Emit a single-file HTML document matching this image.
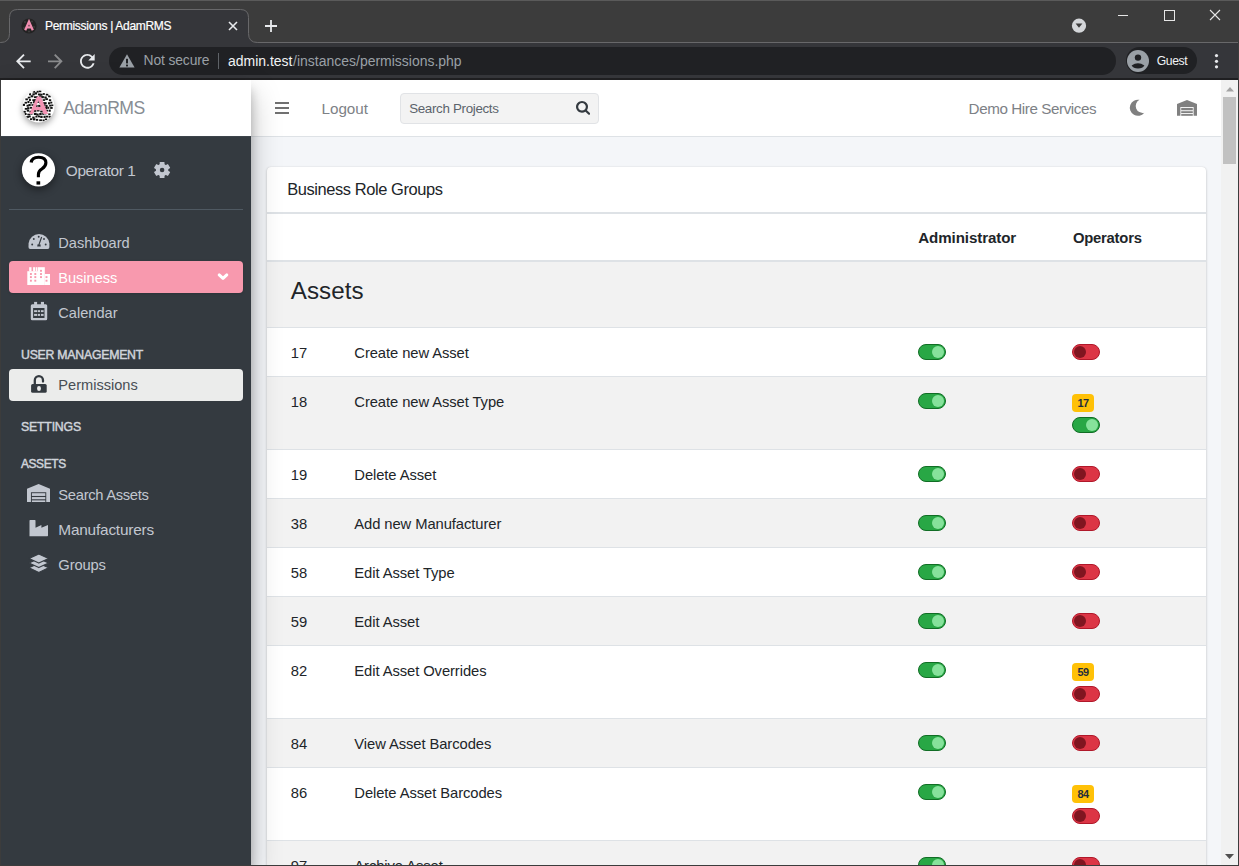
<!DOCTYPE html>
<html><head><meta charset="utf-8"><title>Permissions | AdamRMS</title>
<style>
*{box-sizing:border-box;margin:0;padding:0}
html,body{width:1239px;height:866px;overflow:hidden;background:#3c3c3c;font-family:"Liberation Sans",sans-serif;position:relative}
.a{position:absolute}
.t{white-space:nowrap;line-height:1}
</style></head><body>
<div class="a" style="left:0px;top:0px;width:1239px;height:1px;background:#5a5a5a;"></div>
<div class="a" style="left:0px;top:42px;width:1238px;height:1px;background:#68686a;"></div>
<div class="a" style="left:0px;top:43px;width:1238px;height:37px;background:#35363a;"></div>
<svg class="a" style="left:0px;top:0px;width:270px;height:50px;overflow:visible;" viewBox="0 0 270 50"><path d="M0.5 42.5 Q9.5 42.5 9.5 33.5 L9.5 17.5 Q9.5 9.5 17.5 9.5 L240.5 9.5 Q248.5 9.5 248.5 17.5 L248.5 33.5 Q248.5 42.5 257.5 42.5 L257.5 50 L0.5 50 Z" fill="#35363a"/><path d="M0.5 42.5 Q9.5 42.5 9.5 33.5 L9.5 17.5 Q9.5 9.5 17.5 9.5 L240.5 9.5 Q248.5 9.5 248.5 17.5 L248.5 33.5 Q248.5 42.5 257.5 42.5" fill="none" stroke="#68686a" stroke-width="1"/></svg>
<svg class="a" style="left:21px;top:18px;width:16px;height:16px;overflow:visible;" viewBox="0 0 16 16"><circle cx="8" cy="8" r="7.6" fill="#232323"/><circle cx="4" cy="4" r="1" fill="#3d3d3d"/><circle cx="11" cy="3.5" r="1" fill="#3d3d3d"/><circle cx="13" cy="9" r="1" fill="#3d3d3d"/><circle cx="3" cy="10" r="1" fill="#3d3d3d"/><circle cx="8" cy="13.5" r="1" fill="#3d3d3d"/><path d="M4.2 12.2 L8 3.6 L11.8 12.2 M5.6 9.4 L10.4 9.4" fill="none" stroke="#f08db0" stroke-width="2.3"/></svg>
<div class="a t" style="left:45.00px;top:19.98px;font-size:12.02px;letter-spacing:-0.304px;color:#ffffff;font-weight:normal;-webkit-text-stroke:0.2px #fff">Permissions | AdamRMS</div>
<svg class="a" style="left:228px;top:21px;width:10px;height:10px;overflow:visible;" viewBox="0 0 10 10"><path d="M1 1 L9 9 M9 1 L1 9" stroke="#e8eaed" stroke-width="1.6" fill="none"/></svg>
<svg class="a" style="left:264px;top:19px;width:14px;height:14px;overflow:visible;" viewBox="0 0 14 14"><path d="M7 1 L7 13 M1 7 L13 7" stroke="#e8eaed" stroke-width="1.8" fill="none"/></svg>
<svg class="a" style="left:1071px;top:18px;width:16px;height:16px;overflow:visible;" viewBox="0 0 16 16"><circle cx="8" cy="7.7" r="7.1" fill="#d4d6d9"/><path d="M4.6 5.6 L11.4 5.6 L8 9.8 Z" fill="#3c3c3c"/></svg>
<div class="a" style="left:1118px;top:15px;width:10px;height:1px;background:#e6e6e6;"></div>
<svg class="a" style="left:1163px;top:9px;width:12px;height:12px;overflow:visible;" viewBox="0 0 12 12"><rect x="1.5" y="1.5" width="10" height="10" fill="none" stroke="#e6e6e6" stroke-width="1"/></svg>
<svg class="a" style="left:1209px;top:9px;width:12px;height:12px;overflow:visible;" viewBox="0 0 12 12"><path d="M1 1 L11 11 M11 1 L1 11" stroke="#e6e6e6" stroke-width="1.1" fill="none"/></svg>
<svg class="a" style="left:15.5px;top:53.6px;width:14.7px;height:14.7px;overflow:visible;" viewBox="4 4 16 16"><path d="M20 11H7.83l5.59-5.59L12 4l-8 8 8 8 1.41-1.41L7.83 13H20v-2z" fill="#e8eaed"/></svg>
<svg class="a" style="left:47.7px;top:53.6px;width:14.7px;height:14.7px;overflow:visible;" viewBox="4 4 16 16"><path d="M12 4l-1.41 1.41L16.17 11H4v2h12.17l-5.58 5.59L12 20l8-8z" fill="#8a8b8d"/></svg>
<svg class="a" style="left:79.6px;top:53.6px;width:14.7px;height:14.7px;overflow:visible;" viewBox="4 4 16 16"><path d="M17.65 6.35A7.958 7.958 0 0 0 12 4c-4.42 0-7.99 3.58-7.99 8s3.57 8 7.99 8c3.730 0 6.84-2.55 7.73-6h-2.08A5.990 5.990 0 0 1 12 18c-3.31 0-6-2.69-6-6s2.69-6 6-6c1.66 0 3.14.69 4.22 1.78L13 11h7V4l-2.35 2.35z" fill="#e8eaed"/></svg>
<div class="a" style="left:109px;top:47px;width:1007px;height:28px;background:#202124;border-radius:14px"></div>
<svg class="a" style="left:119px;top:54px;width:16px;height:14px;overflow:visible;" viewBox="0 0 16 14"><path d="M8 0.3 L15.6 13.6 L0.4 13.6 Z" fill="#9aa0a6"/><rect x="7" y="4.8" width="2" height="4.6" fill="#202124"/><rect x="7" y="10.6" width="2" height="1.8" fill="#202124"/></svg>
<div class="a t" style="left:143.50px;top:54.12px;font-size:13.85px;letter-spacing:-0.109px;color:#9aa0a6;font-weight:normal;">Not secure</div>
<div class="a" style="left:218px;top:53px;width:1px;height:16px;background:#5f6368;"></div>
<div class="a t" style="left:228.00px;top:54.02px;font-size:13.98px;letter-spacing:0.000px;color:#f1f3f4;font-weight:normal;">admin.test</div>
<div class="a t" style="left:293.12px;top:54.02px;font-size:13.98px;letter-spacing:0.000px;color:#9aa0a6;font-weight:normal;">/instances/permissions.php</div>
<div class="a" style="left:1126px;top:47px;width:71px;height:27px;background:#202124;border-radius:14px"></div>
<svg class="a" style="left:1127px;top:50px;width:22px;height:22px;overflow:visible;" viewBox="0 0 22 22"><circle cx="11" cy="11" r="11" fill="#9aa0a6"/><circle cx="11" cy="7.6" r="3.2" fill="#202124"/><path d="M4.6 15.6 Q11 10.8 17.4 15.6 Q15.8 18.6 11 18.6 Q6.2 18.6 4.6 15.6 Z" fill="#202124"/></svg>
<div class="a t" style="left:1156.70px;top:54.65px;font-size:12.18px;letter-spacing:-0.382px;color:#f1f3f4;font-weight:normal;">Guest</div>
<svg class="a" style="left:1214px;top:53px;width:5px;height:16px;overflow:visible;" viewBox="0 0 5 16"><circle cx="2.5" cy="2.6" r="1.6" fill="#e8eaed"/><circle cx="2.5" cy="8.3" r="1.6" fill="#e8eaed"/><circle cx="2.5" cy="13.8" r="1.6" fill="#e8eaed"/></svg>
<div class="a" style="left:0px;top:78px;width:1238px;height:2px;background:#1f1f21;"></div>
<div class="a" style="left:1px;top:80px;width:1237px;height:785px;background:#f4f6f9;"></div>
<div class="a" style="left:251px;top:80px;width:970px;height:56px;background:#ffffff;"></div>
<div class="a" style="left:251px;top:136px;width:970px;height:1px;background:#dee2e6;"></div>
<div class="a" style="left:267px;top:167px;width:939px;height:733px;background:#ffffff;border-radius:4px;box-shadow:0 0 1px rgba(0,0,0,.125),0 1px 3px rgba(0,0,0,.2)"></div>
<div class="a t" style="left:287.20px;top:180.70px;font-size:16.47px;letter-spacing:-0.422px;color:#212529;font-weight:normal;">Business Role Groups</div>
<div class="a" style="left:267px;top:212px;width:939px;height:2px;background:#dee2e6;"></div>
<div class="a t" style="left:918.30px;top:230.26px;font-size:15.11px;letter-spacing:-0.093px;color:#212529;font-weight:bold;">Administrator</div>
<div class="a t" style="left:1072.90px;top:230.50px;font-size:14.82px;letter-spacing:-0.217px;color:#212529;font-weight:bold;">Operators</div>
<div class="a" style="left:267px;top:260px;width:939px;height:2px;background:#dee2e6;"></div>
<div class="a" style="left:267px;top:262px;width:939px;height:65px;background:#f2f2f2;"></div>
<div class="a t" style="left:290.80px;top:278.78px;font-size:24.15px;letter-spacing:0.053px;color:#212529;font-weight:normal;">Assets</div>
<div class="a" style="left:267px;top:327px;width:939px;height:49px;background:#ffffff;"></div>
<div class="a" style="left:267px;top:327px;width:939px;height:1px;background:#dee2e6;"></div>
<div class="a t" style="left:290.80px;top:345.73px;font-size:14.78px;letter-spacing:-0.080px;color:#212529;font-weight:normal;">17</div>
<div class="a t" style="left:354.30px;top:345.73px;font-size:14.78px;letter-spacing:-0.080px;color:#212529;font-weight:normal;">Create new Asset</div>
<svg class="a" style="left:918px;top:344px;width:28px;height:16px;overflow:visible;" viewBox="0 0 28 16"><rect x="0.5" y="0.5" width="27" height="15" rx="7.5" fill="#28a745" stroke="#116d25"/><circle cx="20" cy="8" r="6" fill="#86e29b"/></svg>
<svg class="a" style="left:1072px;top:344px;width:28px;height:16px;overflow:visible;" viewBox="0 0 28 16"><rect x="0.5" y="0.5" width="27" height="15" rx="7.5" fill="#dc3545" stroke="#b0182a"/><circle cx="8" cy="8" r="6" fill="#801520"/></svg>
<div class="a" style="left:267px;top:376px;width:939px;height:73px;background:#f2f2f2;"></div>
<div class="a" style="left:267px;top:376px;width:939px;height:1px;background:#dee2e6;"></div>
<div class="a t" style="left:290.80px;top:394.73px;font-size:14.78px;letter-spacing:-0.080px;color:#212529;font-weight:normal;">18</div>
<div class="a t" style="left:354.30px;top:394.73px;font-size:14.78px;letter-spacing:-0.080px;color:#212529;font-weight:normal;">Create new Asset Type</div>
<svg class="a" style="left:918px;top:393px;width:28px;height:16px;overflow:visible;" viewBox="0 0 28 16"><rect x="0.5" y="0.5" width="27" height="15" rx="7.5" fill="#28a745" stroke="#116d25"/><circle cx="20" cy="8" r="6" fill="#86e29b"/></svg>
<div class="a" style="left:1072px;top:394px;width:22px;height:18px;background:#ffc107;border-radius:4px"></div>
<div class="a t" style="left:1077.50px;top:397.73px;font-size:10.91px;letter-spacing:-0.508px;color:#1f2d3d;font-weight:bold;">17</div>
<svg class="a" style="left:1072px;top:417px;width:28px;height:16px;overflow:visible;" viewBox="0 0 28 16"><rect x="0.5" y="0.5" width="27" height="15" rx="7.5" fill="#28a745" stroke="#116d25"/><circle cx="20" cy="8" r="6" fill="#86e29b"/></svg>
<div class="a" style="left:267px;top:449px;width:939px;height:49px;background:#ffffff;"></div>
<div class="a" style="left:267px;top:449px;width:939px;height:1px;background:#dee2e6;"></div>
<div class="a t" style="left:290.80px;top:467.73px;font-size:14.78px;letter-spacing:-0.080px;color:#212529;font-weight:normal;">19</div>
<div class="a t" style="left:354.30px;top:467.73px;font-size:14.78px;letter-spacing:-0.080px;color:#212529;font-weight:normal;">Delete Asset</div>
<svg class="a" style="left:918px;top:466px;width:28px;height:16px;overflow:visible;" viewBox="0 0 28 16"><rect x="0.5" y="0.5" width="27" height="15" rx="7.5" fill="#28a745" stroke="#116d25"/><circle cx="20" cy="8" r="6" fill="#86e29b"/></svg>
<svg class="a" style="left:1072px;top:466px;width:28px;height:16px;overflow:visible;" viewBox="0 0 28 16"><rect x="0.5" y="0.5" width="27" height="15" rx="7.5" fill="#dc3545" stroke="#b0182a"/><circle cx="8" cy="8" r="6" fill="#801520"/></svg>
<div class="a" style="left:267px;top:498px;width:939px;height:49px;background:#f2f2f2;"></div>
<div class="a" style="left:267px;top:498px;width:939px;height:1px;background:#dee2e6;"></div>
<div class="a t" style="left:290.80px;top:516.73px;font-size:14.78px;letter-spacing:-0.080px;color:#212529;font-weight:normal;">38</div>
<div class="a t" style="left:354.30px;top:516.73px;font-size:14.78px;letter-spacing:-0.080px;color:#212529;font-weight:normal;">Add new Manufacturer</div>
<svg class="a" style="left:918px;top:515px;width:28px;height:16px;overflow:visible;" viewBox="0 0 28 16"><rect x="0.5" y="0.5" width="27" height="15" rx="7.5" fill="#28a745" stroke="#116d25"/><circle cx="20" cy="8" r="6" fill="#86e29b"/></svg>
<svg class="a" style="left:1072px;top:515px;width:28px;height:16px;overflow:visible;" viewBox="0 0 28 16"><rect x="0.5" y="0.5" width="27" height="15" rx="7.5" fill="#dc3545" stroke="#b0182a"/><circle cx="8" cy="8" r="6" fill="#801520"/></svg>
<div class="a" style="left:267px;top:547px;width:939px;height:49px;background:#ffffff;"></div>
<div class="a" style="left:267px;top:547px;width:939px;height:1px;background:#dee2e6;"></div>
<div class="a t" style="left:290.80px;top:565.73px;font-size:14.78px;letter-spacing:-0.080px;color:#212529;font-weight:normal;">58</div>
<div class="a t" style="left:354.30px;top:565.73px;font-size:14.78px;letter-spacing:-0.080px;color:#212529;font-weight:normal;">Edit Asset Type</div>
<svg class="a" style="left:918px;top:564px;width:28px;height:16px;overflow:visible;" viewBox="0 0 28 16"><rect x="0.5" y="0.5" width="27" height="15" rx="7.5" fill="#28a745" stroke="#116d25"/><circle cx="20" cy="8" r="6" fill="#86e29b"/></svg>
<svg class="a" style="left:1072px;top:564px;width:28px;height:16px;overflow:visible;" viewBox="0 0 28 16"><rect x="0.5" y="0.5" width="27" height="15" rx="7.5" fill="#dc3545" stroke="#b0182a"/><circle cx="8" cy="8" r="6" fill="#801520"/></svg>
<div class="a" style="left:267px;top:596px;width:939px;height:49px;background:#f2f2f2;"></div>
<div class="a" style="left:267px;top:596px;width:939px;height:1px;background:#dee2e6;"></div>
<div class="a t" style="left:290.80px;top:614.73px;font-size:14.78px;letter-spacing:-0.080px;color:#212529;font-weight:normal;">59</div>
<div class="a t" style="left:354.30px;top:614.73px;font-size:14.78px;letter-spacing:-0.080px;color:#212529;font-weight:normal;">Edit Asset</div>
<svg class="a" style="left:918px;top:613px;width:28px;height:16px;overflow:visible;" viewBox="0 0 28 16"><rect x="0.5" y="0.5" width="27" height="15" rx="7.5" fill="#28a745" stroke="#116d25"/><circle cx="20" cy="8" r="6" fill="#86e29b"/></svg>
<svg class="a" style="left:1072px;top:613px;width:28px;height:16px;overflow:visible;" viewBox="0 0 28 16"><rect x="0.5" y="0.5" width="27" height="15" rx="7.5" fill="#dc3545" stroke="#b0182a"/><circle cx="8" cy="8" r="6" fill="#801520"/></svg>
<div class="a" style="left:267px;top:645px;width:939px;height:73px;background:#ffffff;"></div>
<div class="a" style="left:267px;top:645px;width:939px;height:1px;background:#dee2e6;"></div>
<div class="a t" style="left:290.80px;top:663.73px;font-size:14.78px;letter-spacing:-0.080px;color:#212529;font-weight:normal;">82</div>
<div class="a t" style="left:354.30px;top:663.73px;font-size:14.78px;letter-spacing:-0.080px;color:#212529;font-weight:normal;">Edit Asset Overrides</div>
<svg class="a" style="left:918px;top:662px;width:28px;height:16px;overflow:visible;" viewBox="0 0 28 16"><rect x="0.5" y="0.5" width="27" height="15" rx="7.5" fill="#28a745" stroke="#116d25"/><circle cx="20" cy="8" r="6" fill="#86e29b"/></svg>
<div class="a" style="left:1072px;top:663px;width:22px;height:18px;background:#ffc107;border-radius:4px"></div>
<div class="a t" style="left:1077.50px;top:666.73px;font-size:10.91px;letter-spacing:-0.508px;color:#1f2d3d;font-weight:bold;">59</div>
<svg class="a" style="left:1072px;top:686px;width:28px;height:16px;overflow:visible;" viewBox="0 0 28 16"><rect x="0.5" y="0.5" width="27" height="15" rx="7.5" fill="#dc3545" stroke="#b0182a"/><circle cx="8" cy="8" r="6" fill="#801520"/></svg>
<div class="a" style="left:267px;top:718px;width:939px;height:49px;background:#f2f2f2;"></div>
<div class="a" style="left:267px;top:718px;width:939px;height:1px;background:#dee2e6;"></div>
<div class="a t" style="left:290.80px;top:736.73px;font-size:14.78px;letter-spacing:-0.080px;color:#212529;font-weight:normal;">84</div>
<div class="a t" style="left:354.30px;top:736.73px;font-size:14.78px;letter-spacing:-0.080px;color:#212529;font-weight:normal;">View Asset Barcodes</div>
<svg class="a" style="left:918px;top:735px;width:28px;height:16px;overflow:visible;" viewBox="0 0 28 16"><rect x="0.5" y="0.5" width="27" height="15" rx="7.5" fill="#28a745" stroke="#116d25"/><circle cx="20" cy="8" r="6" fill="#86e29b"/></svg>
<svg class="a" style="left:1072px;top:735px;width:28px;height:16px;overflow:visible;" viewBox="0 0 28 16"><rect x="0.5" y="0.5" width="27" height="15" rx="7.5" fill="#dc3545" stroke="#b0182a"/><circle cx="8" cy="8" r="6" fill="#801520"/></svg>
<div class="a" style="left:267px;top:767px;width:939px;height:73px;background:#ffffff;"></div>
<div class="a" style="left:267px;top:767px;width:939px;height:1px;background:#dee2e6;"></div>
<div class="a t" style="left:290.80px;top:785.73px;font-size:14.78px;letter-spacing:-0.080px;color:#212529;font-weight:normal;">86</div>
<div class="a t" style="left:354.30px;top:785.73px;font-size:14.78px;letter-spacing:-0.080px;color:#212529;font-weight:normal;">Delete Asset Barcodes</div>
<svg class="a" style="left:918px;top:784px;width:28px;height:16px;overflow:visible;" viewBox="0 0 28 16"><rect x="0.5" y="0.5" width="27" height="15" rx="7.5" fill="#28a745" stroke="#116d25"/><circle cx="20" cy="8" r="6" fill="#86e29b"/></svg>
<div class="a" style="left:1072px;top:785px;width:22px;height:18px;background:#ffc107;border-radius:4px"></div>
<div class="a t" style="left:1077.50px;top:788.73px;font-size:10.91px;letter-spacing:-0.508px;color:#1f2d3d;font-weight:bold;">84</div>
<svg class="a" style="left:1072px;top:808px;width:28px;height:16px;overflow:visible;" viewBox="0 0 28 16"><rect x="0.5" y="0.5" width="27" height="15" rx="7.5" fill="#dc3545" stroke="#b0182a"/><circle cx="8" cy="8" r="6" fill="#801520"/></svg>
<div class="a" style="left:267px;top:840px;width:939px;height:49px;background:#f2f2f2;"></div>
<div class="a" style="left:267px;top:840px;width:939px;height:1px;background:#dee2e6;"></div>
<div class="a t" style="left:290.80px;top:858.73px;font-size:14.78px;letter-spacing:-0.080px;color:#212529;font-weight:normal;">97</div>
<div class="a t" style="left:354.30px;top:858.73px;font-size:14.78px;letter-spacing:-0.080px;color:#212529;font-weight:normal;">Archive Asset</div>
<svg class="a" style="left:918px;top:857px;width:28px;height:16px;overflow:visible;" viewBox="0 0 28 16"><rect x="0.5" y="0.5" width="27" height="15" rx="7.5" fill="#28a745" stroke="#116d25"/><circle cx="20" cy="8" r="6" fill="#86e29b"/></svg>
<svg class="a" style="left:1072px;top:857px;width:28px;height:16px;overflow:visible;" viewBox="0 0 28 16"><rect x="0.5" y="0.5" width="27" height="15" rx="7.5" fill="#dc3545" stroke="#b0182a"/><circle cx="8" cy="8" r="6" fill="#801520"/></svg>
<div class="a" style="left:1px;top:80px;width:250px;height:785px;background:#343a40;box-shadow:0 14px 28px rgba(0,0,0,.25),0 10px 10px rgba(0,0,0,.22)"></div>
<div class="a" style="left:1px;top:80px;width:250px;height:56px;background:#ffffff;"></div>
<div class="a" style="left:1px;top:136px;width:250px;height:1px;background:#3d444b;"></div>
<svg class="a" style="left:22px;top:90px;width:33px;height:33px;overflow:visible;filter:drop-shadow(0 3px 3px rgba(0,0,0,.35))" viewBox="0 0 33 33"><defs><clipPath id="lc"><circle cx="16.5" cy="16.5" r="16"/></clipPath></defs><circle cx="16.5" cy="16.5" r="16" fill="#fff"/><g clip-path="url(#lc)"><rect x="0.63" y="13.83" width="2.34" height="2.10" fill="#111"/><rect x="1.35" y="20.86" width="2.46" height="1.84" fill="#111"/><rect x="3.36" y="8.41" width="2.54" height="1.86" fill="#111"/><rect x="2.61" y="11.83" width="2.36" height="1.78" fill="#111"/><rect x="4.56" y="14.76" width="2.20" height="1.94" fill="#111"/><rect x="2.79" y="17.94" width="2.58" height="1.77" fill="#111"/><rect x="4.75" y="19.59" width="2.33" height="2.05" fill="#111"/><rect x="2.55" y="22.98" width="2.03" height="2.00" fill="#111"/><rect x="4.27" y="26.06" width="2.70" height="1.79" fill="#111"/><rect x="7.04" y="3.27" width="2.05" height="2.02" fill="#111"/><rect x="5.78" y="6.70" width="2.66" height="1.77" fill="#111"/><rect x="6.93" y="9.05" width="2.02" height="1.88" fill="#111"/><rect x="5.41" y="11.03" width="2.05" height="2.06" fill="#111"/><rect x="6.42" y="14.04" width="2.31" height="2.12" fill="#111"/><rect x="5.09" y="17.16" width="2.44" height="2.13" fill="#111"/><rect x="7.44" y="20.73" width="2.22" height="1.85" fill="#111"/><rect x="5.32" y="23.69" width="2.77" height="1.69" fill="#111"/><rect x="6.55" y="25.53" width="2.19" height="1.89" fill="#111"/><rect x="10.38" y="3.33" width="2.41" height="1.97" fill="#111"/><rect x="8.64" y="5.24" width="2.72" height="2.07" fill="#111"/><rect x="10.32" y="9.25" width="2.31" height="1.84" fill="#111"/><rect x="8.17" y="11.97" width="2.05" height="1.64" fill="#111"/><rect x="9.41" y="14.16" width="2.27" height="1.63" fill="#111"/><rect x="8.01" y="16.90" width="2.08" height="1.82" fill="#111"/><rect x="9.04" y="20.83" width="2.49" height="1.69" fill="#111"/><rect x="8.26" y="22.95" width="2.29" height="1.67" fill="#111"/><rect x="10.25" y="26.60" width="2.37" height="1.89" fill="#111"/><rect x="8.03" y="28.26" width="2.27" height="1.76" fill="#111"/><rect x="10.72" y="0.99" width="2.42" height="1.69" fill="#111"/><rect x="12.65" y="2.29" width="2.42" height="2.19" fill="#111"/><rect x="12.00" y="6.26" width="2.21" height="1.82" fill="#111"/><rect x="12.12" y="9.10" width="2.43" height="2.07" fill="#111"/><rect x="11.04" y="11.12" width="2.65" height="2.19" fill="#111"/><rect x="12.97" y="14.86" width="2.65" height="2.04" fill="#111"/><rect x="11.08" y="17.52" width="2.28" height="1.62" fill="#111"/><rect x="12.04" y="19.83" width="2.21" height="2.02" fill="#111"/><rect x="11.86" y="22.83" width="2.75" height="2.19" fill="#111"/><rect x="13.35" y="25.79" width="2.18" height="1.74" fill="#111"/><rect x="10.93" y="28.22" width="2.50" height="2.14" fill="#111"/><rect x="14.63" y="0.62" width="2.07" height="2.00" fill="#111"/><rect x="15.92" y="3.50" width="2.60" height="1.89" fill="#111"/><rect x="13.87" y="6.26" width="2.27" height="2.08" fill="#111"/><rect x="16.15" y="8.52" width="2.32" height="2.17" fill="#111"/><rect x="14.71" y="11.29" width="2.10" height="1.69" fill="#111"/><rect x="16.16" y="14.83" width="2.12" height="2.10" fill="#111"/><rect x="14.98" y="17.56" width="2.28" height="1.93" fill="#111"/><rect x="14.75" y="19.48" width="2.78" height="1.99" fill="#111"/><rect x="14.31" y="23.55" width="2.35" height="2.12" fill="#111"/><rect x="16.01" y="25.56" width="2.20" height="1.78" fill="#111"/><rect x="13.98" y="28.90" width="2.21" height="1.85" fill="#111"/><rect x="16.86" y="0.07" width="2.47" height="2.14" fill="#111"/><rect x="18.19" y="3.68" width="2.40" height="1.92" fill="#111"/><rect x="17.16" y="5.37" width="2.35" height="1.71" fill="#111"/><rect x="17.74" y="9.23" width="2.14" height="1.88" fill="#111"/><rect x="17.48" y="11.72" width="2.26" height="1.91" fill="#111"/><rect x="18.54" y="14.88" width="2.08" height="1.94" fill="#111"/><rect x="16.64" y="17.04" width="2.62" height="1.90" fill="#111"/><rect x="18.22" y="20.58" width="2.73" height="1.87" fill="#111"/><rect x="17.25" y="23.00" width="2.41" height="2.02" fill="#111"/><rect x="18.24" y="25.81" width="2.38" height="2.16" fill="#111"/><rect x="17.20" y="29.35" width="2.75" height="1.76" fill="#111"/><rect x="20.79" y="3.10" width="2.06" height="1.74" fill="#111"/><rect x="19.24" y="6.07" width="2.63" height="2.14" fill="#111"/><rect x="20.60" y="9.21" width="2.53" height="1.69" fill="#111"/><rect x="20.60" y="12.17" width="2.18" height="2.17" fill="#111"/><rect x="20.81" y="14.38" width="2.79" height="2.10" fill="#111"/><rect x="19.47" y="17.30" width="2.41" height="1.80" fill="#111"/><rect x="20.64" y="20.09" width="2.58" height="1.61" fill="#111"/><rect x="20.22" y="23.02" width="2.01" height="1.80" fill="#111"/><rect x="21.50" y="25.77" width="2.05" height="2.19" fill="#111"/><rect x="20.51" y="29.48" width="2.08" height="1.76" fill="#111"/><rect x="23.76" y="3.75" width="2.66" height="1.76" fill="#111"/><rect x="22.28" y="6.48" width="2.46" height="2.02" fill="#111"/><rect x="23.35" y="8.20" width="2.55" height="1.86" fill="#111"/><rect x="22.15" y="12.17" width="2.51" height="2.08" fill="#111"/><rect x="23.59" y="14.89" width="2.05" height="2.12" fill="#111"/><rect x="22.71" y="17.00" width="2.44" height="2.16" fill="#111"/><rect x="23.66" y="19.76" width="2.42" height="1.74" fill="#111"/><rect x="22.43" y="22.67" width="2.04" height="1.72" fill="#111"/><rect x="23.63" y="25.69" width="2.61" height="1.77" fill="#111"/><rect x="22.86" y="28.44" width="2.28" height="1.61" fill="#111"/><rect x="26.13" y="5.42" width="2.66" height="1.86" fill="#111"/><rect x="26.89" y="9.27" width="2.31" height="1.90" fill="#111"/><rect x="25.98" y="12.23" width="2.27" height="2.10" fill="#111"/><rect x="27.18" y="14.74" width="2.32" height="1.81" fill="#111"/><rect x="25.20" y="16.76" width="2.06" height="2.04" fill="#111"/><rect x="26.67" y="19.63" width="2.07" height="2.10" fill="#111"/><rect x="26.26" y="23.37" width="2.23" height="1.75" fill="#111"/><rect x="26.70" y="25.86" width="2.13" height="1.87" fill="#111"/><rect x="28.28" y="11.73" width="2.00" height="1.76" fill="#111"/><rect x="29.31" y="14.50" width="2.03" height="1.61" fill="#111"/><rect x="28.19" y="16.97" width="2.47" height="1.92" fill="#111"/></g><path fill-rule="evenodd" fill="#f394b4" d="M15.0 6.4 L18.8 6.4 L26.1 23.9 L21.4 23.9 L20.1 20.3 L12.3 20.3 L11.0 23.9 L7.4 23.9 Z M16.5 10.4 L14.0 16.9 L19.0 16.9 Z"/></svg>
<div class="a t" style="left:63.30px;top:99.82px;font-size:17.62px;letter-spacing:-0.530px;color:#878d94;font-weight:normal;">AdamRMS</div>
<svg class="a" style="left:20px;top:150px;width:38px;height:40px;overflow:visible;filter:drop-shadow(0 3px 4px rgba(0,0,0,.45))" viewBox="0 0 38 40"><circle cx="18.5" cy="19.85" r="16.6" fill="#fff"/></svg>
<svg class="a" style="left:20px;top:150px;width:38px;height:40px;overflow:visible;" viewBox="0 0 38 40"><path d="M11.2 12.5 Q11.7 7.2 18.6 7.2 Q25.9 7.2 25.9 12.8 Q25.9 16.4 21.8 19 Q18.4 21.1 18.4 24.4 L18.4 27.2" fill="none" stroke="#000" stroke-width="3.1"/><rect x="16.5" y="31.3" width="3.7" height="3.3" fill="#000"/></svg>
<div class="a t" style="left:65.80px;top:163.09px;font-size:15.42px;letter-spacing:-0.390px;color:#c2c7d0;font-weight:normal;">Operator 1</div>
<svg class="a" style="left:148px;top:156px;width:28px;height:28px;overflow:visible;" viewBox="0 0 28 28"><g transform="translate(14.1 14)" fill="#c2c7d0"><circle r="6.2"/><rect x="-2.4" y="-8.1" width="4.8" height="5" rx="0.6" transform="rotate(0)"/><rect x="-2.4" y="-8.1" width="4.8" height="5" rx="0.6" transform="rotate(60)"/><rect x="-2.4" y="-8.1" width="4.8" height="5" rx="0.6" transform="rotate(120)"/><rect x="-2.4" y="-8.1" width="4.8" height="5" rx="0.6" transform="rotate(180)"/><rect x="-2.4" y="-8.1" width="4.8" height="5" rx="0.6" transform="rotate(240)"/><rect x="-2.4" y="-8.1" width="4.8" height="5" rx="0.6" transform="rotate(300)"/></g><circle cx="14.1" cy="14" r="2.3" fill="#343a40"/></svg>
<div class="a" style="left:9px;top:209px;width:234px;height:1px;background:#4f5962;"></div>
<div class="a" style="left:9px;top:261px;width:234px;height:32px;background:#f899ae;border-radius:4px;box-shadow:0 1px 3px rgba(0,0,0,.12)"></div>
<div class="a" style="left:9px;top:369px;width:234px;height:32px;background:#ebeceb;border-radius:4px"></div>
<div class="a t" style="left:58.30px;top:235.69px;font-size:14.60px;letter-spacing:0.000px;color:#c2c7d0;font-weight:normal;">Dashboard</div>
<div class="a t" style="left:58.20px;top:270.89px;font-size:14.60px;letter-spacing:0.000px;color:#ffffff;font-weight:normal;">Business</div>
<div class="a t" style="left:58.30px;top:305.59px;font-size:14.60px;letter-spacing:0.000px;color:#c2c7d0;font-weight:normal;">Calendar</div>
<div class="a t" style="left:58.30px;top:378.49px;font-size:14.60px;letter-spacing:0.000px;color:#484e54;font-weight:normal;">Permissions</div>
<div class="a t" style="left:58.30px;top:488.34px;font-size:14.78px;letter-spacing:-0.311px;color:#c2c7d0;font-weight:normal;">Search Assets</div>
<div class="a t" style="left:58.30px;top:521.93px;font-size:15.38px;letter-spacing:-0.199px;color:#c2c7d0;font-weight:normal;">Manufacturers</div>
<div class="a t" style="left:58.30px;top:558.36px;font-size:14.75px;letter-spacing:-0.139px;color:#c2c7d0;font-weight:normal;">Groups</div>
<div class="a t" style="left:21.00px;top:348.56px;font-size:12.29px;letter-spacing:-0.237px;color:#d0d4db;font-weight:normal;-webkit-text-stroke:0.45px #d0d4db">USER MANAGEMENT</div>
<div class="a t" style="left:21.00px;top:420.51px;font-size:12.34px;letter-spacing:-0.215px;color:#d0d4db;font-weight:normal;-webkit-text-stroke:0.45px #d0d4db">SETTINGS</div>
<div class="a t" style="left:21.00px;top:458.87px;font-size:11.92px;letter-spacing:-0.381px;color:#d0d4db;font-weight:normal;-webkit-text-stroke:0.45px #d0d4db">ASSETS</div>
<svg class="a" style="left:24px;top:228px;width:30px;height:26px;overflow:visible;" viewBox="0 0 30 26"><path d="M6.2 21 Q4.5 21 4.5 19 L4.6 15.4 A10.45 10.45 0 0 1 25.4 15.4 L25.4 19 Q25.4 21 23.7 21 Z" fill="#c2c7d0"/><g fill="#343a40"><circle cx="8.2" cy="16.5" r="0.95"/><circle cx="9.8" cy="11" r="0.95"/><circle cx="14.7" cy="8.8" r="0.95"/><circle cx="20" cy="11" r="0.95"/><circle cx="21.7" cy="16.5" r="0.95"/><path d="M17.1 8.8 L18.2 9.2 L15.6 16.6 L14.5 16.2 Z"/><path d="M13.6 16.2 L16.4 16.2 L16.8 18.6 L13.2 18.6 Z"/></g></svg>
<svg class="a" style="left:24px;top:262px;width:30px;height:30px;overflow:visible;" viewBox="0 0 30 30"><g fill="#fff"><rect x="3.3" y="9.2" width="10.8" height="13.8"/><rect x="5.2" y="5.2" width="2.3" height="4.2"/><rect x="9.1" y="5.2" width="2.2" height="4.2"/><rect x="11.9" y="5.2" width="1.5" height="4.2"/><rect x="13.9" y="5.2" width="6.9" height="17.8"/><rect x="20.6" y="12" width="5.4" height="11"/></g><rect x="5.95" y="11.05" width="1.9" height="1.9" fill="#f899ae"/><rect x="10.350000000000001" y="11.05" width="1.9" height="1.9" fill="#f899ae"/><rect x="16.05" y="7.8500000000000005" width="1.9" height="1.9" fill="#f899ae"/><rect x="16.05" y="11.05" width="1.9" height="1.9" fill="#f899ae"/><rect x="5.95" y="14.15" width="1.9" height="1.9" fill="#f899ae"/><rect x="10.350000000000001" y="14.15" width="1.9" height="1.9" fill="#f899ae"/><rect x="16.05" y="14.15" width="1.9" height="1.9" fill="#f899ae"/><rect x="21.55" y="14.15" width="1.9" height="1.9" fill="#f899ae"/><rect x="5.95" y="17.75" width="1.9" height="1.9" fill="#f899ae"/><rect x="10.350000000000001" y="17.75" width="1.9" height="1.9" fill="#f899ae"/><rect x="21.55" y="17.75" width="1.9" height="1.9" fill="#f899ae"/></svg>
<svg class="a" style="left:210px;top:265px;width:26px;height:24px;overflow:visible;" viewBox="0 0 26 24"><path d="M9.2 9.9 L13 13.4 L16.8 9.9" fill="none" stroke="#fff" stroke-width="3" stroke-linecap="round" stroke-linejoin="round"/></svg>
<svg class="a" style="left:26px;top:298px;width:26px;height:26px;overflow:visible;" viewBox="0 0 26 26"><path fill="#c2c7d0" fill-rule="evenodd" d="M6.3 6.3 L19.7 6.3 Q21.2 6.3 21.2 7.8 L21.2 20.7 Q21.2 22.2 19.7 22.2 L6.3 22.2 Q4.8 22.2 4.8 20.7 L4.8 7.8 Q4.8 6.3 6.3 6.3 Z M7.1 10.1 L7.1 20 L18.5 20 L18.5 10.1 Z"/><g fill="#c2c7d0"><rect x="8.1" y="3.9" width="3" height="3"/><rect x="14.9" y="3.9" width="3.1" height="3"/><rect x="8.1" y="12.2" width="2.9" height="1.9"/><rect x="11.7" y="12.2" width="2.4" height="1.9"/><rect x="15" y="12.2" width="2.6" height="1.9"/><rect x="8.1" y="15.9" width="2.9" height="2"/><rect x="11.7" y="15.9" width="2.4" height="2"/><rect x="15" y="15.9" width="2.6" height="2"/></g></svg>
<svg class="a" style="left:26px;top:370px;width:26px;height:26px;overflow:visible;" viewBox="0 0 26 26"><path d="M8.8 14.5 L8.8 10.2 A4.1 4.1 0 0 1 17 10.2 L17 11.6" fill="none" stroke="#343a40" stroke-width="2.3" stroke-linecap="round"/><rect x="5.1" y="14.1" width="15.6" height="8.6" rx="1.5" fill="#343a40"/><rect x="11.1" y="16" width="3.8" height="4.9" rx="1.9" fill="#ebeceb"/></svg>
<svg class="a" style="left:26.9px;top:483.8px;width:23.2px;height:18.4px;overflow:visible;overflow:hidden" viewBox="0 0 100 100" preserveAspectRatio="none"><path d="M0 26 L50 0 L100 26 L100 100 L83 100 L83 45 L17 45 L17 100 L0 100 Z" fill="#c2c7d0"/><g fill="#c2c7d0"><rect x="21" y="50" width="58" height="15"/><rect x="21" y="71" width="58" height="12"/><rect x="21" y="89" width="58" height="11"/></g></svg>
<svg class="a" style="left:24px;top:514px;width:30px;height:30px;overflow:visible;" viewBox="0 0 30 30"><path d="M5.5 22.2 L5.5 6.6 Q5.5 5.9 6.2 5.9 L10.9 5.9 Q11.5 5.9 11.5 6.6 L11.5 13.7 L17.4 11.1 L17.4 13.7 L24 11.1 L24 21.5 Q24 22.2 23.3 22.2 Z" fill="#c2c7d0"/></svg>
<svg class="a" style="left:24px;top:514px;width:30px;height:64px;overflow:visible;" viewBox="0 0 30 64"><g fill="#c2c7d0" stroke="#343a40" stroke-width="1.1" stroke-linejoin="round"><path d="M14.8 49.2 L24.6 53.8 L14.8 58.4 L5 53.8 Z"/><path d="M14.8 44.4 L24.6 49.0 L14.8 53.6 L5 49.0 Z"/><path d="M14.8 39.9 L24.6 44.5 L14.8 49.1 L5 44.5 Z"/></g></svg>
<div class="a" style="left:275px;top:102px;width:14px;height:2px;background:#707070;"></div>
<div class="a" style="left:275px;top:107px;width:14px;height:2px;background:#707070;"></div>
<div class="a" style="left:275px;top:112px;width:14px;height:2px;background:#707070;"></div>
<div class="a t" style="left:321.60px;top:100.66px;font-size:15.22px;letter-spacing:-0.057px;color:#7d8186;font-weight:normal;">Logout</div>
<div class="a" style="left:400px;top:93px;width:199px;height:31px;background:#f3f3f3;border:1px solid #e1e3e6;border-radius:4px"></div>
<div class="a t" style="left:409.20px;top:101.73px;font-size:13.37px;letter-spacing:-0.328px;color:#5b636b;font-weight:normal;">Search Projects</div>
<svg class="a" style="left:576px;top:101px;width:14.20px;height:13.80px;" viewBox="0.0 -1408.0 1664.0 1664.0" preserveAspectRatio="none"><path transform="scale(1,-1)" fill="#343a40" d="M1020.5 387.5Q1152 519 1152.0 704.0Q1152 889 1020.5 1020.5Q889 1152 704.0 1152.0Q519 1152 387.5 1020.5Q256 889 256.0 704.0Q256 519 387.5 387.5Q519 256 704.0 256.0Q889 256 1020.5 387.5ZM1664 -128Q1664 -180 1626.0 -218.0Q1588 -256 1536 -256Q1482 -256 1446 -218L1103 124Q924 0 704 0Q561 0 430.5 55.5Q300 111 205.5 205.5Q111 300 55.5 430.5Q0 561 0.0 704.0Q0 847 55.5 977.5Q111 1108 205.5 1202.5Q300 1297 430.5 1352.5Q561 1408 704.0 1408.0Q847 1408 977.5 1352.5Q1108 1297 1202.5 1202.5Q1297 1108 1352.5 977.5Q1408 847 1408 704Q1408 484 1284 305L1627 -38Q1664 -75 1664 -128Z"/></svg>
<div class="a t" style="left:968.60px;top:101.38px;font-size:15.20px;letter-spacing:-0.412px;color:#7d8186;font-weight:normal;">Demo Hire Services</div>
<svg class="a" style="left:1124px;top:94px;width:30px;height:30px;overflow:visible;" viewBox="0 0 30 30"><path d="M15.5 5.8 A8.1 8.1 0 1 0 20.3 18.7 A6.93 6.93 0 0 1 15.5 5.8 Z" fill="#808080"/></svg>
<svg class="a" style="left:1176.9px;top:100.1px;width:20.0px;height:15.8px;overflow:visible;overflow:hidden" viewBox="0 0 100 100" preserveAspectRatio="none"><path d="M0 26 L50 0 L100 26 L100 100 L83 100 L83 45 L17 45 L17 100 L0 100 Z" fill="#808080"/><g fill="#808080"><rect x="21" y="50" width="58" height="15"/><rect x="21" y="71" width="58" height="12"/><rect x="21" y="89" width="58" height="11"/></g></svg>
<div class="a" style="left:1221px;top:80px;width:17px;height:785px;background:#f1f1f1;"></div>
<div class="a" style="left:1223px;top:97px;width:13px;height:67px;background:#c1c1c1;"></div>
<svg class="a" style="left:1225.5px;top:87px;width:8px;height:4.5px;overflow:visible;" viewBox="0 0 8 4.5"><path d="M0 4.5 L4 0 L8 4.5 Z" fill="#a3a3a3"/></svg>
<svg class="a" style="left:1225px;top:854px;width:9px;height:5px;overflow:visible;" viewBox="0 0 9 5"><path d="M0 0 L4.5 5 L9 0 Z" fill="#505050"/></svg>
<div class="a" style="left:0px;top:80px;width:1px;height:786px;background:#3c3c3c;"></div>
<div class="a" style="left:1238px;top:80px;width:1px;height:786px;background:#3c3c3c;"></div>
<div class="a" style="left:0px;top:865px;width:1239px;height:1px;background:#3c3c3c;"></div>
</body></html>
